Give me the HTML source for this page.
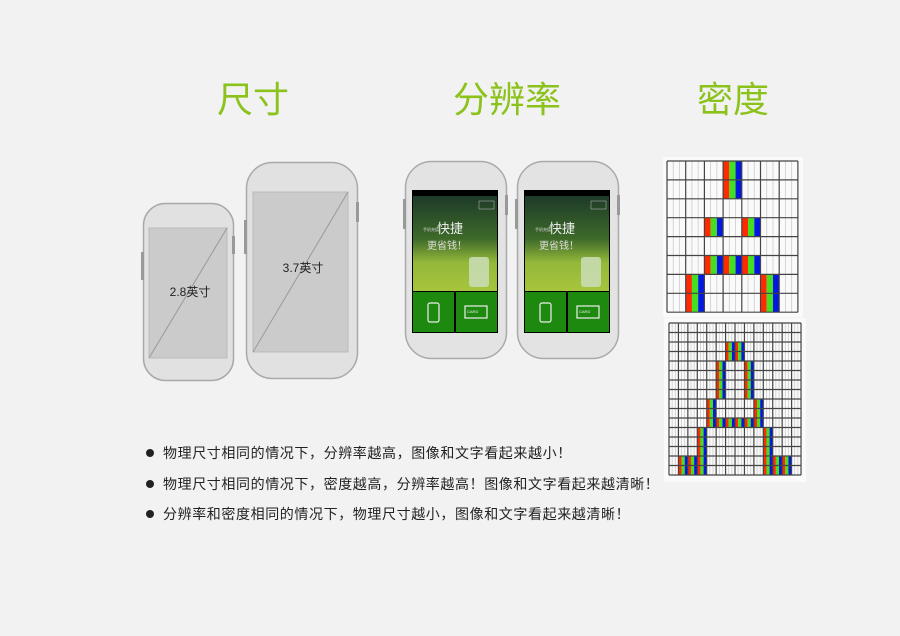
<!DOCTYPE html>
<html><head><meta charset="utf-8"><style>
html,body{margin:0;padding:0;background:#f2f2f2;}
body{width:900px;height:636px;position:relative;overflow:hidden;font-family:"Liberation Sans","Noto Sans CJK SC",sans-serif;}
.t{position:absolute;top:78px;font-size:36px;color:#8cc21c;transform:translateX(-50%);white-space:nowrap;line-height:44px;}
.b{position:absolute;left:163px;font-size:14px;letter-spacing:0.6px;color:#222;line-height:18px;font-family:"Noto Sans CJK SC",sans-serif;white-space:nowrap;}
.b:before{content:"";position:absolute;left:-17px;top:5px;width:8px;height:8px;border-radius:50%;background:#222;}
svg{position:absolute;left:0;top:0;}
</style></head><body>
<div class="t" style="left:253px">尺寸</div>
<div class="t" style="left:507px">分辨率</div>
<div class="t" style="left:733px">密度</div>
<svg width="900" height="636" id="s">
<rect x="143.5" y="203.5" width="90" height="177" rx="22" fill="#e1e1e1" stroke="#a9a9a9" stroke-width="1.5"/>
<rect x="141" y="252" width="3" height="28" fill="#999"/>
<rect x="232" y="236" width="3" height="18" fill="#999"/>
<rect x="149" y="228" width="78" height="130" fill="#cbcbcb" stroke="#bbb"/>
<line x1="149" y1="358" x2="227" y2="228" stroke="#999"/>
<text x="190" y="296" font-size="12" text-anchor="middle" fill="#222">2.8英寸</text>
<rect x="246.5" y="162.5" width="111" height="216" rx="26" fill="#e1e1e1" stroke="#a9a9a9" stroke-width="1.5"/>
<rect x="244" y="220" width="3" height="34" fill="#999"/>
<rect x="356" y="202" width="3" height="20" fill="#999"/>
<rect x="253" y="192" width="95" height="160" fill="#cbcbcb" stroke="#bbb"/>
<line x1="253" y1="352" x2="348" y2="192" stroke="#999"/>
<text x="303" y="272" font-size="12" text-anchor="middle" fill="#222">3.7英寸</text>
<defs>
<linearGradient id="g" x1="0" y1="0" x2="0" y2="1"><stop offset="0" stop-color="#1e3a28"/><stop offset="0.45" stop-color="#3d6a2a"/><stop offset="0.7" stop-color="#94b83a"/><stop offset="1" stop-color="#a7c43c"/></linearGradient>
<g id="ph">
<rect x="0.5" y="0.5" width="101" height="197" rx="26" fill="#e3e3e3" stroke="#aaa" stroke-width="1.5"/>
<rect x="-2" y="38" width="3" height="30" fill="#999"/>
<rect x="100" y="34" width="3" height="20" fill="#999"/>
<rect x="7" y="29" width="86" height="143" fill="#000"/>
<rect x="8" y="35" width="84" height="95" fill="url(#g)"/>
<rect x="74" y="40" width="15" height="8" fill="none" stroke="#aaa" stroke-width=".6"/>
<text x="32" y="72" font-size="13" fill="#eee">快捷</text>
<text x="18" y="70" font-size="4" fill="#ddd">手机充值</text>
<text x="22" y="88" font-size="10" fill="#ddd">更省钱！</text>
<rect x="64" y="96" width="20" height="30" rx="3" fill="#c9dcb3" opacity=".9"/>
<rect x="8" y="131" width="41" height="40" fill="#1d8a0f"/>
<rect x="51" y="131" width="41" height="40" fill="#1d8a0f"/>
<rect x="23" y="142" width="11" height="19" rx="2" fill="none" stroke="#eee" stroke-width="1.2"/>
<rect x="60" y="145" width="22" height="12" fill="none" stroke="#eee" stroke-width="1.2"/>
<text x="62" y="152" font-size="4" fill="#eee">CARD</text>
</g></defs>
<use href="#ph" x="405" y="161"/>
<use href="#ph" x="517" y="161"/>
<rect x="663" y="157" width="140" height="160" fill="#fafafa"/>
<rect x="664" y="318" width="142" height="164" fill="#fafafa"/>
<g id="grids"></g>
</svg>
<div class="b" style="top:444px">物理尺寸相同的情况下，分辨率越高，图像和文字看起来越小！</div>
<div class="b" style="top:475px">物理尺寸相同的情况下，密度越高，分辨率越高！图像和文字看起来越清晰！</div>
<div class="b" style="top:505px">分辨率和密度相同的情况下，物理尺寸越小，图像和文字看起来越清晰！</div>
<script>
var G=document.getElementById('grids'),h='';
function grid(x0,y0,cols,rows,w,hh,on){
 for(var r=0;r<rows;r++)for(var c=0;c<cols;c++){
  var x=x0+c*w,y=y0+r*hh;
  if(on[r+','+c]){var s=w/3;
   h+='<rect x="'+x+'" y="'+y+'" width="'+s+'" height="'+hh+'" fill="#ff2a00"/><rect x="'+(x+s)+'" y="'+y+'" width="'+s+'" height="'+hh+'" fill="#44e020"/><rect x="'+(x+2*s)+'" y="'+y+'" width="'+s+'" height="'+hh+'" fill="#0018e0"/>';
  }else{
   for(var k=1;k<3;k++)h+='<line x1="'+(x+k*w/3)+'" y1="'+y+'" x2="'+(x+k*w/3)+'" y2="'+(y+hh)+'" stroke="#ccc" stroke-width=".8"/>';
  }
 }
 for(var c=0;c<=cols;c++)h+='<line x1="'+(x0+c*w)+'" y1="'+y0+'" x2="'+(x0+c*w)+'" y2="'+(y0+rows*hh)+'" stroke="#444" stroke-width="1.2"/>';
 for(var r=0;r<=rows;r++)h+='<line x1="'+x0+'" y1="'+(y0+r*hh)+'" x2="'+(x0+cols*w)+'" y2="'+(y0+r*hh)+'" stroke="#444" stroke-width="1.2"/>';
}
function m(a){var o={};a.forEach(function(p){o[p[0]+','+p[1]]=1});return o;}
grid(667,161,7,8,18.7,18.9,m([[0,3],[1,3],[3,2],[3,4],[5,2],[5,3],[5,4],[6,1],[6,5],[7,1],[7,5]]));
var a=[[2,6],[2,7],[3,6],[3,7]];
for(var r=4;r<=7;r++){a.push([r,5]);a.push([r,8]);}
for(var r=8;r<=10;r++){a.push([r,4]);a.push([r,9]);}
for(var c=5;c<=8;c++)a.push([10,c]);
for(var r=11;r<=15;r++){a.push([r,3]);a.push([r,10]);}
a.push([14,1],[14,2],[15,1],[15,2],[14,11],[14,12],[15,11],[15,12]);
grid(669,323,14,16,9.43,9.5,m(a));
G.innerHTML=h;
</script>
</body></html>
